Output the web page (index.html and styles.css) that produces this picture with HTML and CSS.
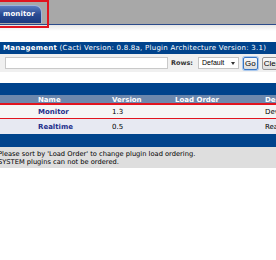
FILE: index.html
```html
<!DOCTYPE html>
<html lang="en">
<head>
  <meta charset="UTF-8" />
  <title>Cacti | Plugin Management</title>
  <link rel="stylesheet" href="styles.css">
</head>
<body>
  <div class="tabbar">
    <div class="tab">monitor</div>
    <div class="mark mark-tab"></div>
  </div>
  <div class="tabline"></div>

  <main>
    <div class="title-bar">
      <b>Management</b> (Cacti Version: 0.8.8a, Plugin Architecture Version: 3.1)
    </div>

    <div class="filter-row">
      <input class="filter-input" type="text">
      <span class="filter-label">Rows:</span>
      <span class="filter-select">Default</span>
      <button class="btn btn-go">Go</button>
      <button class="btn">Clear</button>
    </div>

    <div class="plugins">
      <div class="nav-bar"></div>
      <div class="row head">
        <span></span>
        <span>Name</span>
        <span>Version</span>
        <span>Load Order</span>
        <span>Description</span>
      </div>
      <div class="row odd">
        <span></span>
        <span class="plugin-name">Monitor</span>
        <span>1.3</span>
        <span></span>
        <span>Device Monitoring</span>
        <div class="mark mark-row"></div>
      </div>
      <div class="row even">
        <span></span>
        <span class="plugin-name">Realtime</span>
        <span>0.5</span>
        <span></span>
        <span>Realtime Graphs</span>
      </div>
      <div class="nav-bar bottom"></div>
    </div>

    <div class="note">
      <p>Please sort by 'Load Order' to change plugin load ordering.</p>
      <p>SYSTEM plugins can not be ordered.</p>
    </div>
  </main>
</body>
</html>
```

FILE: styles.css
```css
* {
  margin: 0;
  padding: 0;
  box-sizing: border-box;
  font-family: "DejaVu Sans", Verdana, sans-serif;
}

body {
  background: #ffffff;
  color: #000;
  width: 276px;
  height: 260px;
  overflow: hidden;
  font-size: 7px;
}

.tabbar {
  position: relative;
  height: 24px;
  background: #a8a8a8;
  padding-top: 5px;
}

.tab {
  width: 42px;
  height: 18px;
  background: linear-gradient(#5a7cc0, #2a4b93 50%, #1b3a80);
  border: 1px solid #9fb3dc;
  border-left: none;
  border-bottom: none;
  border-radius: 0 7px 0 0;
  color: #fff;
  font-weight: bold;
  font-size: 7px;
  line-height: 16px;
  padding-left: 3px;
  letter-spacing: 0.1px;
}

.tabline {
  height: 7px;
  border-top: 1px solid #2c4b8a;
  background: linear-gradient(#e6e6e6, #ffffff);
}

.mark {
  position: absolute;
  border: 2px solid #e1141e;
}

.mark-tab {
  left: 0;
  top: 0;
  width: 49px;
  height: 28px;
  border-left: none;
}

main {
  padding-top: 11px;
}

.title-bar {
  background: #00438c;
  color: #fff;
  height: 12px;
  line-height: 12px;
  padding-left: 3px;
  font-size: 7px;
  letter-spacing: 0.25px;
  white-space: nowrap;
}

.filter-row {
  display: flex;
  align-items: center;
  height: 18px;
  background: #f0f0f0;
  padding-left: 5px;
  white-space: nowrap;
  overflow: hidden;
}

.filter-row > * {
  flex-shrink: 0;
}

.filter-input {
  width: 163px;
  height: 12px;
  border: 1px solid #c9c9c9;
  background: #fff;
}

.filter-label {
  font-weight: bold;
  font-size: 6.5px;
  color: #333;
  margin-left: 3px;
  width: 27px;
}

.filter-select {
  position: relative;
  width: 41px;
  height: 12px;
  line-height: 10px;
  font-size: 7px;
  padding-left: 3px;
  border: 1px solid #c4c4c4;
  background: #fff;
  font-family: "Liberation Sans", Arial, sans-serif;
}

.filter-select::after {
  content: "";
  position: absolute;
  right: 3px;
  top: 4px;
  border: 2.5px solid transparent;
  border-top: 3px solid #333;
}

.btn {
  height: 13px;
  font-size: 8px;
  padding: 0 1px;
  margin-left: 4px;
  border: 1px solid #999;
  border-radius: 2px;
  background: linear-gradient(#fafafa, #dcdcdc);
  font-family: "Liberation Sans", Arial, sans-serif;
}

.btn-go {
  border-color: #3a77c4;
  box-shadow: 0 0 0 1px #a9c8ee;
}

.plugins {
  margin-top: 11px;
  width: 320px;
}

.nav-bar {
  height: 12px;
  background: #00438c;
}

.nav-bar.bottom {
  height: 13px;
}

.row {
  position: relative;
  display: grid;
  grid-template-columns: 38px 74px 63px 90px 60px;
  align-items: center;
  white-space: nowrap;
}

.row.head {
  height: 9px;
  background: #6d88ad;
  color: #fff;
  font-weight: bold;
}

.row.odd,
.row.even {
  height: 15px;
}

.row.odd {
  background: #f5f5f5;
}

.row.even {
  background: #e7e9f2;
}

.plugin-name {
  color: #1e2f8c;
  font-weight: bold;
}

.mark-row {
  left: -2px;
  top: -1px;
  width: 290px;
  height: 17px;
}

.note {
  background: #dedede;
  padding: 3px 0 2px;
  margin-left: -2px;
  font-size: 6.7px;
  line-height: 8px;
}
```
